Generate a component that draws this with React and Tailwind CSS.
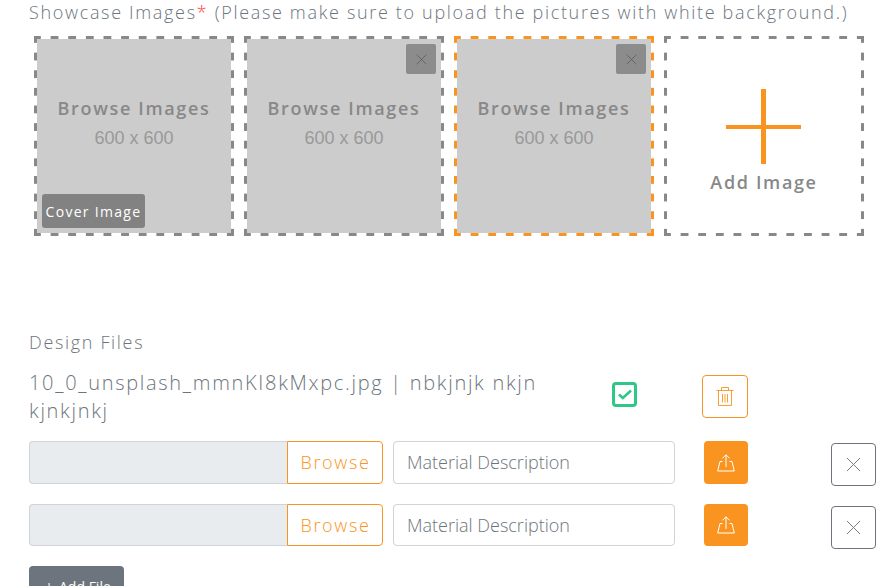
import React from 'react';

const font = { fontFamily: '"Open Sans", sans-serif' };

// chrome's own dashed border is too tight here: 8px dash on a 17.6px period
const grayDashes = '[background:linear-gradient(90deg,#888888_8px,transparent_8px)_-1px_0/17.636px_3px_repeat-x,linear-gradient(90deg,#888888_8px,transparent_8px)_-1px_100%/17.636px_3px_repeat-x,linear-gradient(180deg,#888888_8px,transparent_8px)_0_-1px/3px_17.636px_repeat-y,linear-gradient(180deg,#888888_8px,transparent_8px)_100%_-1px/3px_17.636px_repeat-y]';
const orangeDashes = '[background:linear-gradient(90deg,#fa9420_8px,transparent_8px)_-1px_0/17.636px_3px_repeat-x,linear-gradient(90deg,#fa9420_8px,transparent_8px)_-1px_100%/17.636px_3px_repeat-x,linear-gradient(180deg,#fa9420_8px,transparent_8px)_0_-1px/3px_17.636px_repeat-y,linear-gradient(180deg,#fa9420_8px,transparent_8px)_100%_-1px/3px_17.636px_repeat-y]';

const CloseIcon = ({ size = 16 }) => (
  <svg width={size} height={size} viewBox="0 0 16 16" fill="none" stroke="currentColor" strokeWidth="1">
    <path d="M1 1l14 14M15 1L1 15" />
  </svg>
);

const TrashIcon = () => (
  <svg width="18" height="19" viewBox="0 0 18 19" fill="none" stroke="#fa9420" strokeOpacity="0.9" strokeWidth="1">
    <path d="M0.500 3.500h17M5.500 3.500V0.500h7v3M2.500 3.500v15h13v-15M6.500 7v8.500M9 7v8.500M11.500 7v8.500" />
  </svg>
);

const UploadIcon = () => (
  <svg width="18" height="18" viewBox="0 0 18 18" fill="none" stroke="#fff" strokeWidth="1">
    <path d="M9 13V0.800M5.500 4.300L9 0.800l3.500 3.500M5.500 7.500H3L0.700 17h16.600L15 7.500h-2.500" />
  </svg>
);

const ImageBox = ({ highlighted, removable, cover }) => (
  <div className={`relative w-[200px] h-[200px] p-[3px] ${highlighted ? orangeDashes : grayDashes}`}>
    <div className="flex flex-col items-center h-full bg-[#cccccc] pt-[57px]">
      <div className="text-[18px] leading-[24px] font-semibold tracking-[1.65px] text-[#888888]">Browse Images</div>
      <div className="mt-[6px] text-[18px] leading-[24px] text-[#999999]" style={{ fontFamily: '"Liberation Sans", sans-serif' }}>600 x 600</div>
    </div>
    {removable && (
      <div className="absolute top-[8px] right-[8px] w-[30px] h-[30px] rounded-[2px] bg-[#8c8c8c] flex items-center justify-center text-[#555555]">
        <CloseIcon size={11} />
      </div>
    )}
    {cover && (
      <div className="absolute left-[8px] bottom-[8px] w-[103px] h-[34px] rounded-[3px] bg-[#828282] flex items-center justify-center text-[14px] tracking-[1.3px] text-white">
        Cover Image
      </div>
    )}
  </div>
);

const AddBox = () => (
  <div className={`w-[200px] h-[200px] flex flex-col items-center pt-[53px] ${grayDashes}`}>
    <div className="relative -ml-[1px] w-[75px] h-[75px]">
      <div className="absolute left-0 right-0 top-[36px] h-[4px] bg-[#fa9420]" />
      <div className="absolute top-0 bottom-0 left-[35px] w-[5px] bg-[#fa9420]" />
    </div>
    <div className="mt-[6px] text-[18px] leading-[24px] font-semibold tracking-[1.65px] text-[#888888]">Add Image</div>
  </div>
);

const UploadRow = ({ height }) => (
  <div className="flex items-start">
    <div className="flex w-[354px]" style={{ height }}>
      <div className="w-[258px] h-full bg-[#e9ecef] border border-[#ced4da] border-r-0 rounded-l-[4px]" />
      <div className="w-[96px] h-full border border-[#fa9420] rounded-r-[4px] flex items-center justify-center pl-[1px] text-[18px] font-light tracking-[1.65px] text-[#fa9420]">
        Browse
      </div>
    </div>
    <div className="ml-[10px] w-[282px] border border-[#ced4da] rounded-[4px] flex items-center pl-[13px] text-[18px] font-light text-[#6c757d]" style={{ height }}>
      Material Description
    </div>
    <div className="ml-[29px] w-[44px] rounded-[4px] bg-[#fa9420] flex items-center justify-center" style={{ height }}>
      <UploadIcon />
    </div>
    <div className="ml-[83px] mt-[2px] w-[45px] h-[43px] border border-[#6c757d] rounded-[4px] flex items-center justify-center text-[#6c757d]">
      <CloseIcon size={15} />
    </div>
  </div>
);

export default function App() {
  return (
    <div className="h-[586px] overflow-hidden bg-white pl-[29px]" style={font}>
      <div className="h-[24px] text-[18px] leading-[24px] font-light tracking-[1.67px] text-[#6c757d] whitespace-nowrap">
        Showcase Images<span className="text-[#ff3b3b]">*</span> (Please make sure to upload the pictures with white background.)
      </div>

      <div className="flex gap-[10px] ml-[5px] mt-[12px]">
        <ImageBox cover />
        <ImageBox removable />
        <ImageBox removable highlighted />
        <AddBox />
      </div>

      <div className="mt-[94px] text-[18px] leading-[24px] font-light tracking-[1.67px] text-[#6c757d]">Design Files</div>

      <div className="flex items-start mt-[15px]">
        <div className="w-[560px] text-[20px] leading-[28px] font-light tracking-[1.7px] text-[#6c757d]">
          10_0_unsplash_mmnKI8kMxpc.jpg | nbkjnjk nkjn kjnkjnkj
        </div>
        <div className="ml-[23px] mt-[13px] w-[25px] h-[25px] border-[3px] border-[#2fc786] rounded-[4px] flex items-center justify-center">
          <svg width="14" height="11" viewBox="0 0 14 11" fill="none" stroke="#2fc786" strokeWidth="2.500">
            <path d="M1 5.500l3.800 3.500L13 1.500" />
          </svg>
        </div>
        <div className="ml-[65px] mt-[6px] w-[46px] h-[43px] border border-[#fa9420] rounded-[4px] flex items-center justify-center">
          <TrashIcon />
        </div>
      </div>

      <div className="mt-[16px]">
        <UploadRow height={43} />
      </div>
      <div className="mt-[18px]">
        <UploadRow height={42} />
      </div>

      <div className="mt-[17px] flex gap-[6px] w-[95px] h-[40px] rounded-[4px] bg-[#6c757d] pt-[10px] pl-[16px] text-[14px] text-white">
        <span>+</span>
        <span>Add File</span>
      </div>
    </div>
  );
}
